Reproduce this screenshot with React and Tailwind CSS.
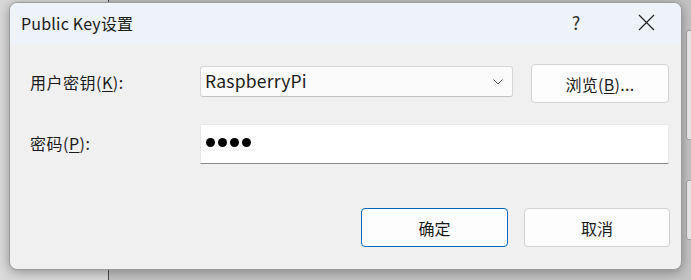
import React from "react";

const Key = ({ children }) => <span className="underline underline-offset-2">{children}</span>;

const PublicKeyDialog = () => {
  return (
    <div className="w-[673px] h-[268px] flex flex-col rounded-lg border border-[#9c9c9c] bg-[#f0f0f0] shadow-[0_2px_12px_rgba(0,0,0,0.35)] overflow-hidden text-[#1b1b1b]">
      {/* title bar */}
      <div className="h-[41px] shrink-0 flex items-center bg-[#eef3f9]">
        <div className="flex-1 pl-[11px] pb-[2px] text-[16px] tracking-[0.2px]">Public Key设置</div>
        <div className="w-[70px] h-full flex items-center justify-center text-[18px] text-[#333] pb-[2px]">?</div>
        <div className="w-[70px] h-full flex items-center justify-center pb-[2px]">
          <svg width="17" height="17" viewBox="0 0 17 17" fill="none" stroke="#222" strokeWidth="1.2">
            <path d="M1 1 L16 16 M16 1 L1 16" />
          </svg>
        </div>
      </div>

      {/* body */}
      <div className="flex-1 flex flex-col pl-[20px] pr-[11px] pt-[20px] text-[16px]">
        <div className="flex items-start h-[39px]">
          <div className="w-[170px] pt-[6px] tracking-[0.5px]">
            用户密钥(<Key>K</Key>):
          </div>
          <div className="mt-[2px] w-[313px] h-[31px] flex items-center justify-between bg-[#fbfbfb] border border-[#d6d6d6] border-b-[#c2c2c2] rounded-[3px] pl-[4px] pr-[9px]">
            <span className="text-[17.5px] pb-[1px] tracking-[0.2px]">RaspberryPi</span>
            <svg width="10" height="6" viewBox="0 0 10 6" fill="none" stroke="#555" strokeWidth="1">
              <path d="M0.5 0.5 L5 5 L9.5 0.5" />
            </svg>
          </div>
          <button className="ml-[18px] w-[138px] h-[39px] bg-[#fdfdfd] border border-[#d3d3d3] rounded-[4px] text-[16px] flex items-center justify-center tracking-[0.3px]">
            浏览(<Key>B</Key>)...
          </button>
        </div>

        <div className="flex items-center mt-[21px] h-[40px]">
          <div className="w-[170px] pb-[3px] tracking-[0.5px]">
            密码(<Key>P</Key>):
          </div>
          <div className="w-[469px] h-[40px] flex items-center gap-[3px] bg-white border border-[#e8e8e8] border-b-[#8a8a8a] pl-[5px] pb-[4px]">
            <span className="w-[9px] h-[9px] rounded-full bg-black" />
            <span className="w-[9px] h-[9px] rounded-full bg-black" />
            <span className="w-[9px] h-[9px] rounded-full bg-black" />
            <span className="w-[9px] h-[9px] rounded-full bg-black" />
          </div>
        </div>

        <div className="flex justify-end gap-[16px] mt-[44px]">
          <button className="w-[147px] h-[39px] bg-[#fdfdfd] border border-[#0067c0] rounded-[4px] text-[16px]">
            确定
          </button>
          <button className="w-[146px] h-[39px] bg-[#fdfdfd] border border-[#d3d3d3] rounded-[4px] text-[16px]">
            取消
          </button>
        </div>
      </div>
    </div>
  );
};

export default function App() {
  return (
    <div
      className="relative w-[691px] h-[280px] overflow-hidden bg-[#c4c4c4]"
      style={{ fontFamily: '"Noto Sans CJK SC", "Noto Sans", sans-serif' }}
    >
      {/* windows behind */}
      <div className="absolute left-0 top-0 w-[109px] h-full bg-[#dadada] border-r border-[#4a4a4a]" />
      <div className="absolute left-[686px] top-[30px] w-[10px] h-[110px] bg-[#ececec] border border-[#a8a8a8] rounded-[3px]" />
      <div className="absolute left-[686px] top-[180px] w-[10px] h-[60px] bg-[#ececec] border border-[#a8a8a8] rounded-[3px]" />
      <div className="absolute left-[9px] top-[2px]">
        <PublicKeyDialog />
      </div>
    </div>
  );
}
